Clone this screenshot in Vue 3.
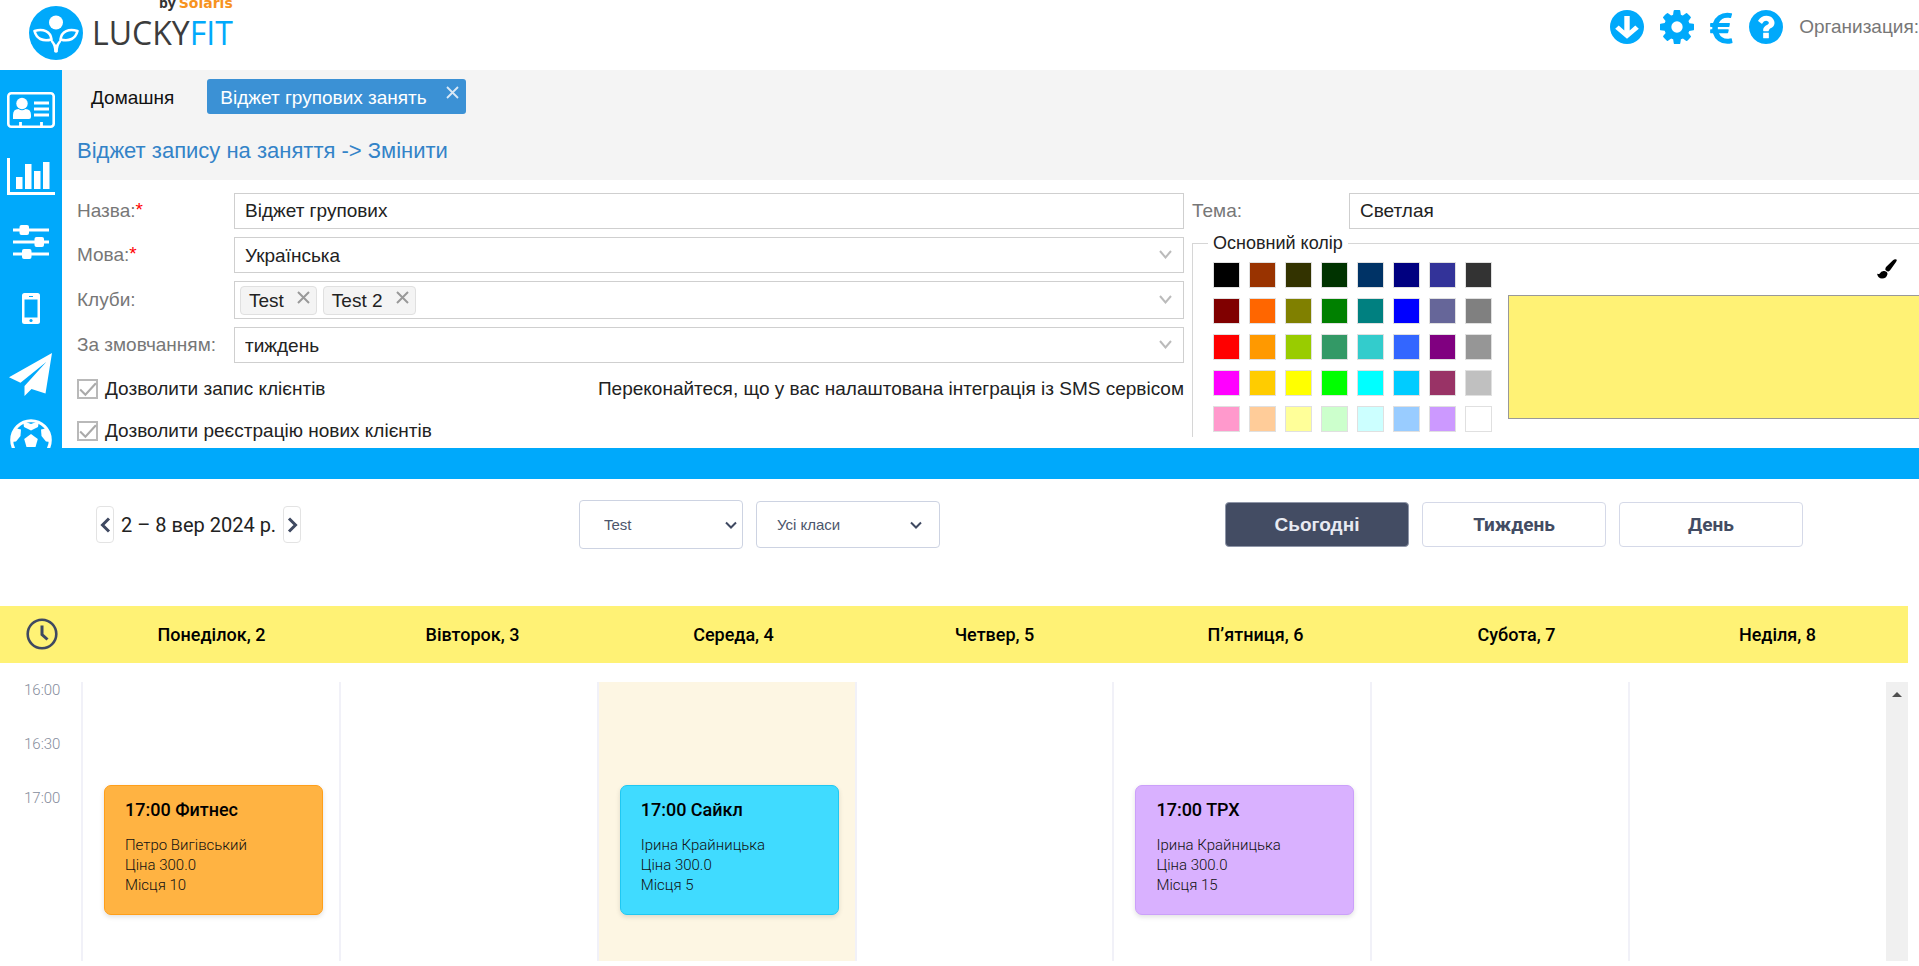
<script setup>
import { ref } from 'vue'

const name = ref('Віджет групових')
const theme = ref('Светлая')
const clubs = ref(['Test', 'Test 2'])
const allowBooking = ref(true)
const allowSignup = ref(true)
const color = ref('#fff275')

const palette = [
  '#000000', '#993300', '#333300', '#003300', '#003366', '#000080', '#333399', '#333333',
  '#800000', '#ff6600', '#808000', '#008000', '#008080', '#0000ff', '#666699', '#808080',
  '#ff0000', '#ff9900', '#99cc00', '#339966', '#33cccc', '#3366ff', '#800080', '#969696',
  '#ff00ff', '#ffcc00', '#ffff00', '#00ff00', '#00ffff', '#00ccff', '#993366', '#c0c0c0',
  '#ff99cc', '#ffcc99', '#ffff99', '#ccffcc', '#ccffff', '#99ccff', '#cc99ff', '#ffffff',
]

const times = ['16:00', '16:30', '17:00']
const days = [
  { title: 'Понеділок, 2', event: { kind: 'orange', title: '17:00 Фитнес', coach: 'Петро Вигівський', price: 'Ціна 300.0', places: 'Місця 10' } },
  { title: 'Вівторок, 3' },
  { title: 'Середа, 4', today: true, event: { kind: 'cyan', title: '17:00 Сайкл', coach: 'Ірина Крайницька', price: 'Ціна 300.0', places: 'Місця 5' } },
  { title: 'Четвер, 5' },
  { title: 'П’ятниця, 6', event: { kind: 'violet', title: '17:00 ТРХ', coach: 'Ірина Крайницька', price: 'Ціна 300.0', places: 'Місця 15' } },
  { title: 'Субота, 7' },
  { title: 'Неділя, 8' },
]
</script>

<template>
  <div class="page">
    <header class="top">
      <a class="logo" href="#" aria-label="LuckyFit">
        <svg class="logo-mark" viewBox="0 0 54 54" aria-hidden="true">
          <circle cx="27" cy="27" r="27" fill="#00a9fb" />
          <circle cx="27" cy="16.500" r="7" fill="#fff" />
          <g fill="none" stroke="#fff" stroke-width="2.6" stroke-linejoin="round">
            <path d="M5.500 25 C14 22.500 21.500 25 22.500 33.500 C13.500 36 7.500 32.500 5.500 25Z" />
            <path d="M48.500 25 C40 22.500 32.500 25 31.500 33.500 C40.500 36 46.500 32.500 48.500 25Z" />
          </g>
          <path d="M21 32 Q25 35 27 39 Q29 35 33 32 L32 36 Q29 39 28.800 46 Q27 47.500 25.200 46 Q25 39 22 36Z" fill="#fff" />
        </svg>
        <span class="logo-text">
          <span class="logo-by">by<b>Solaris</b></span>
          <span class="logo-name">LUCKY<span>FIT</span></span>
        </span>
      </a>
      <nav class="tools">
        <button type="button" aria-label="Завантажити">
          <svg width="34" height="34" viewBox="-17 -17 34 34">
            <circle r="17" fill="#00a9fb" />
            <path d="M-2.700 -11H2.700V3.500L8.300 -1.600L11.800 1.800L0 11.800L-11.800 1.800L-8.300 -1.600L-2.700 3.500Z" fill="#fff" />
          </svg>
        </button>
        <button type="button" aria-label="Налаштування">
          <svg width="34" height="34" viewBox="0 128 1536 1536"><path fill="#00a9fb" d="M1024 896q0-106-75-181t-181-75-181 75-75 181 75 181 181 75 181-75 75-181zm512-109v222q0 12-8 23t-20 13l-185 28q-19 54-39 91 35 50 107 138 10 12 10 25t-9 23q-27 37-99 108t-94 71q-12 0-26-9l-138-108q-44 23-91 38-16 136-29 186-7 28-36 28h-222q-14 0-24.500-8.500t-11.500-21.500l-28-184q-49-16-90-37l-141 107q-10 9-25 9-14 0-25-11-126-114-165-168-7-10-7-23 0-12 8-23 15-21 51-66.500t54-70.500q-27-50-41-99l-183-27q-13-2-21-12.500t-8-23.500v-222q0-12 8-23t19-13l186-28q14-46 39-92-40-57-107-138-10-12-10-24 0-10 9-23 26-36 98.500-107.500t94.500-71.500q13 0 26 10l138 107q44-23 91-38 16-136 29-186 7-28 36-28h222q14 0 24.500 8.500t11.500 21.500l28 184q49 16 90 37l142-107q9-9 24-9 13 0 25 10 129 119 165 170 7 8 7 22 0 12-8 23-15 21-51 66.500t-54 70.500q26 50 41 98l183 28q13 2 21 12.500t8 23.500z" /></svg>
        </button>
        <button type="button" aria-label="Оплата">
          <svg width="23" height="34" viewBox="0 190 1027 1536"><path fill="#00a9fb" d="M976 1491l35 159q3 12-3 22.500t-17 14.500l-5 1q-4 2-10.500 3.500t-16 4.500-21.500 5.500-25.500 5-30 5-33.500 4.500-36.500 3-38.500 1q-234 0-409-130.500t-238-351.500h-95q-13 0-22.500-9.500t-9.500-22.500v-113q0-13 9.500-22.500t22.500-9.500h66q-2-57 1-105h-67q-14 0-23-9t-9-23v-114q0-14 9-23t23-9h98q67-210 243.500-338t400.500-128q102 0 194 23 11 3 20 15 6 11 3 24l-43 159q-3 13-14 19.500t-24 2.500l-4-1q-4-1-11.500-2.500l-17.500-3.500-22.500-3.500-26-3-29-2.500-29.500-1q-126 0-226 64t-150 176h468q16 0 25 12 10 12 7 26l-24 114q-5 26-32 26h-488q-3 37 0 105h459q15 0 25 12 9 12 6 27l-24 112q-2 11-11 18.500t-20 7.500h-387q48 117 149.500 185.500t228.500 68.500q18 0 36-1.500t33.500-3.500 29.500-4.500 24.500-5 18.500-4.500l12-3 5-2q13-5 26 2 12 7 15 21z" /></svg>
        </button>
        <button type="button" aria-label="Допомога">
          <svg width="34" height="34" viewBox="0 128 1536 1536"><path fill="#00a9fb" d="M896 1376v-192q0-14-9-23t-23-9h-192q-14 0-23 9t-9 23v192q0 14 9 23t23 9h192q14 0 23-9t9-23zm256-672q0-88-55.500-163t-138.500-116-170-41q-243 0-371 213-15 24 8 42l132 100q7 6 19 6 16 0 25-12 53-68 86-92 34-24 86-24 48 0 85.500 26t37.500 59q0 38-20 61t-68 45q-63 28-115.500 86.500t-52.500 125.500v36q0 14 9 23t23 9h192q14 0 23-9t9-23q0-19 21.500-49.500t54.500-49.500q32-18 49-28.500t46-35 44.500-48 28-60.500 12.500-81zm384 192q0 209-103 385.500t-279.500 279.500-385.500 103-385.500-103-279.500-279.500-103-385.500 103-385.500 279.500-279.500 385.500-103 385.500 103 279.500 279.500 103 385.500z" /></svg>
        </button>
        <span class="org">Организация:</span>
      </nav>
    </header>

    <div class="admin">
      <aside class="side">
        <a href="#" aria-label="Клієнти">
          <svg width="48" height="36" viewBox="0 0 48 36">
            <rect x="1.300" y="1.300" width="45.400" height="33.400" rx="3" fill="none" stroke="#fff" stroke-width="2.600" />
            <circle cx="15" cy="11.500" r="5.700" fill="#fff" />
            <path d="M6 27v-4q0-6 5.500-6 3.500 2.500 7 0 5.500 0 5.500 6v2q0 2-2 2Z" fill="#fff" />
            <path d="M27 11h15M27 17h15M27 23h15M13.500 30v5M34.500 30v5" stroke="#fff" stroke-width="2.800" />
          </svg>
        </a>
        <a href="#" aria-label="Звіти">
          <svg width="48" height="37" viewBox="0 0 48 37" fill="#fff">
            <path d="M0 0h3v34h45v3H0ZM9 19h6.500v12H9ZM18 6h6.500v25H18ZM27 13h6.500v18H27ZM36 4h6.500v27H36Z" />
          </svg>
        </a>
        <a href="#" aria-label="Параметри">
          <svg width="36" height="34" viewBox="0 0 36 34" fill="#fff">
            <path d="M0 3.500h36v3H0ZM0 15.500h36v3H0ZM0 27.500h36v3H0Z" />
            <rect x="6.500" y="0" width="9.500" height="10" rx="2" />
            <rect x="21.500" y="12" width="9.500" height="10" rx="2" />
            <rect x="9" y="24" width="9.500" height="10" rx="2" />
          </svg>
        </a>
        <a href="#" aria-label="Мобільний застосунок">
          <svg width="18" height="31" viewBox="0 0 18 31">
            <rect width="18" height="31" rx="2.500" fill="#fff" />
            <path d="M2.500 6.500h13v18h-13ZM7 3h4v1H7Z" fill="#00a9fb" />
            <circle cx="9" cy="27.500" r="1.600" fill="#00a9fb" />
          </svg>
        </a>
        <a href="#" aria-label="Розсилка">
          <svg width="43" height="43" viewBox="0 0 43 43" fill="#fff">
            <path d="M43 0L0 24.300L11.500 29.700L37.500 8.700L15.500 33V43L22.500 36L36.500 40.500Z" />
          </svg>
        </a>
        <a href="#" aria-label="Заняття">
          <svg width="42" height="42" viewBox="-21 -21 42 42">
            <circle r="19.300" fill="none" stroke="#fff" stroke-width="3" />
            <g fill="#fff">
              <path d="M0 -6L6.800 -1L4.500 7H-4.500L-6.800 -1Z" />
              <path d="M-8 -19L0 -16L8 -19L7 -13L0 -9.500L-7 -13Z" />
              <path d="M-20 -3L-16.500 -12L-10 -10.500L-10.500 -4L-15 1.500L-19.500 2Z" />
              <path d="M20 -3L16.500 -12L10 -10.500L10.500 -4L15 1.500L19.500 2Z" />
              <path d="M-17 10L-9 9L-5 13L-7 19Z" />
              <path d="M17 10L9 9L5 13L7 19Z" />
            </g>
          </svg>
        </a>
      </aside>

      <main class="main">
        <div class="head">
          <nav class="tabs">
            <a class="tab" href="#">Домашня</a>
            <div class="tab active">
              <a href="#">Віджет групових занять</a>
              <button type="button" aria-label="Закрити вкладку">
                <svg width="13" height="13" viewBox="0 0 13 13"><path d="M1 1L12 12M12 1L1 12" stroke="#d9e9f6" stroke-width="1.800" /></svg>
              </button>
            </div>
          </nav>
          <h1>Віджет запису на заняття -&gt; Змінити</h1>
        </div>

        <form class="form" @submit.prevent>
          <div class="col">
            <div class="row">
              <label for="f-name">Назва:<sup>*</sup></label>
              <input id="f-name" v-model="name" class="field" type="text" />
            </div>
            <div class="row">
              <label for="f-lang">Мова:<sup>*</sup></label>
              <div class="pick">
                <select id="f-lang" class="field"><option>Українська</option></select>
                <svg class="chev" viewBox="0 0 13 9"><path d="M1 1L6.500 7.500L12 1" /></svg>
              </div>
            </div>
            <div class="row">
              <span id="f-clubs" class="lbl">Клуби:</span>
              <div class="pick">
                <div class="field tags" role="group" aria-labelledby="f-clubs">
                  <span v-for="club in clubs" :key="club" class="tag">
                    {{ club }}
                    <button type="button" :aria-label="'Прибрати ' + club">
                      <svg width="13" height="13" viewBox="0 0 13 13"><path d="M1 1L12 12M12 1L1 12" stroke="#999" stroke-width="2" /></svg>
                    </button>
                  </span>
                </div>
                <svg class="chev" viewBox="0 0 13 9"><path d="M1 1L6.500 7.500L12 1" /></svg>
              </div>
            </div>
            <div class="row">
              <label for="f-view">За змовчанням:</label>
              <div class="pick">
                <select id="f-view" class="field"><option>тиждень</option></select>
                <svg class="chev" viewBox="0 0 13 9"><path d="M1 1L6.500 7.500L12 1" /></svg>
              </div>
            </div>
            <div class="checks">
              <div class="check-row first">
                <label class="check">
                  <span class="box">
                    <input v-model="allowBooking" type="checkbox" />
                    <svg v-if="allowBooking" viewBox="0 0 20 20"><path d="M3 10L8 15L18 4" /></svg>
                  </span>
                  Дозволити запис клієнтів
                </label>
                <span>Переконайтеся, що у вас налаштована інтеграція із SMS сервісом</span>
              </div>
              <div class="check-row">
                <label class="check">
                  <span class="box">
                    <input v-model="allowSignup" type="checkbox" />
                    <svg v-if="allowSignup" viewBox="0 0 20 20"><path d="M3 10L8 15L18 4" /></svg>
                  </span>
                  Дозволити реєстрацію нових клієнтів
                </label>
              </div>
            </div>
          </div>

          <div class="col right">
            <div class="row">
              <label for="f-theme">Тема:</label>
              <input id="f-theme" v-model="theme" class="field" type="text" />
            </div>
            <fieldset class="colors">
              <legend>Основний колір</legend>
              <div class="colors-body">
                <div class="palette">
                  <button
                    v-for="c in palette"
                    :key="c"
                    type="button"
                    class="swatch"
                    :style="{ backgroundColor: c }"
                    :aria-label="c"
                    @click="color = c"
                  ></button>
                </div>
                <div class="preview-col">
                  <button type="button" class="brush" aria-label="Обрати колір">
                    <svg width="20" height="20" viewBox="0 0 20 20">
                      <path d="M19.500 0.500Q17.500 0 16 1.200L9 8Q8 10 8.500 11Q10 12.500 11.500 12.500Q13 11.500 14 10L19 3Q20.200 1.500 19.500 .5Z" />
                      <path d="M7.500 12Q10.500 12.500 10.500 15Q9.500 19.500 5 19.500Q1 19.500 0 14.500Q1.500 15.500 2.800 14.500Q4 11.500 7.500 12Z" />
                    </svg>
                  </button>
                  <div class="preview" :style="{ backgroundColor: color }"></div>
                </div>
              </div>
            </fieldset>
          </div>
        </form>
      </main>
    </div>

    <div class="divider"></div>

    <section class="widget">
      <div class="bar">
        <div class="range">
          <button type="button" class="step" aria-label="Попередній тиждень">
            <svg width="11" height="16" viewBox="0 0 11 16"><path d="M9 1.500L2.500 8L9 14.500" /></svg>
          </button>
          <span>2 – 8 вер 2024 р.</span>
          <button type="button" class="step" aria-label="Наступний тиждень">
            <svg width="11" height="16" viewBox="0 0 11 16"><path d="M2 1.500L8.500 8L2 14.500" /></svg>
          </button>
        </div>
        <div class="filters">
          <div class="filter club">
            <select aria-label="Клуб"><option>Test</option></select>
            <svg viewBox="0 0 12 9"><path d="M1 1.500L6 6.500L11 1.500" /></svg>
          </div>
          <div class="filter kind">
            <select aria-label="Клас"><option>Усі класи</option></select>
            <svg viewBox="0 0 12 9"><path d="M1 1.500L6 6.500L11 1.500" /></svg>
          </div>
        </div>
        <div class="modes">
          <button type="button" class="mode today-btn">Сьогодні</button>
          <button type="button" class="mode">Тиждень</button>
          <button type="button" class="mode">День</button>
        </div>
      </div>

      <div class="days">
        <div class="clock">
          <svg width="32" height="32" viewBox="0 0 32 32" fill="none" stroke="#3f4961">
            <circle cx="16" cy="16" r="14.300" stroke-width="2.600" />
            <path d="M16 7.500V16.500L21.500 21.500" stroke-width="3" />
          </svg>
        </div>
        <div v-for="d in days" :key="d.title" class="day">{{ d.title }}</div>
      </div>

      <div class="body">
        <div class="times">
          <div v-for="t in times" :key="t" class="time">{{ t }}</div>
        </div>
        <div v-for="d in days" :key="d.title" class="slot" :class="{ today: d.today }">
          <article v-if="d.event" class="event" :class="d.event.kind">
            <h2>{{ d.event.title }}</h2>
            <p>{{ d.event.coach }}</p>
            <p>{{ d.event.price }}</p>
            <p>{{ d.event.places }}</p>
          </article>
        </div>
        <div class="scroll">
          <svg width="10" height="5" viewBox="0 0 10 5"><path d="M0 5L5 0L10 5Z" fill="#505050" /></svg>
        </div>
      </div>
    </section>
  </div>
</template>

<style>
body {
  margin: 0;
  background: #fff;
}
</style>

<style scoped>
* {
  box-sizing: border-box;
}
.page {
  min-height: 100vh;
  display: flex;
  flex-direction: column;
  padding-bottom: 5px;
  overflow: hidden;
  font-family: "Liberation Sans", Arial, sans-serif;
  font-size: 19px;
  color: #222;
}
a {
  color: inherit;
  text-decoration: none;
}
button {
  padding: 0;
  border: 0;
  background: none;
  font: inherit;
  color: inherit;
  cursor: pointer;
}
svg {
  display: block;
}

/* Top bar */
.top {
  height: 70px;
  display: flex;
  justify-content: space-between;
  align-items: flex-start;
  overflow: hidden;
}
.logo {
  display: flex;
  padding-left: 29px;
}
.logo-mark {
  width: 54px;
  height: 54px;
  margin-top: 6px;
}
.logo-text {
  display: flex;
  flex-direction: column;
  align-items: flex-end;
  padding-left: 9px;
}
.logo-by {
  display: flex;
  gap: 3px;
  height: 12px;
  line-height: 12px;
  margin-top: -3px;
  font-family: "Open Sans", sans-serif;
  font-size: 14px;
  font-weight: 700;
  color: #333;
}
.logo-by b {
  font-family: "DejaVu Sans", sans-serif;
  font-size: 14px;
  color: #f7931e;
}
.logo-name {
  font-family: "Open Sans", sans-serif;
  font-size: 32px;
  font-weight: 500;
  line-height: 48px;
  color: #3c3c3c;
}
.logo-name span {
  color: #00a9fb;
}
.tools {
  display: flex;
  align-items: center;
  gap: 16px;
  height: 54px;
}
.org {
  color: #777;
}

/* Admin area */
.admin {
  display: flex;
}
.side {
  flex: 0 0 62px;
  contain: size;
  display: flex;
  flex-direction: column;
  padding: 7px 1px 0 0;
  background: #00a9fb;
  overflow: hidden;
}
.side a {
  flex: 0 0 66px;
  display: flex;
  align-items: center;
  justify-content: center;
}
.main {
  flex: 1;
  min-width: 0;
}
.head {
  padding: 9px 15px 13px;
  background: #f4f4f4;
}
.tabs {
  display: flex;
  gap: 19px;
}
.tab {
  height: 35px;
  line-height: 37px;
  padding: 0 14px;
  color: #111;
}
.tab.active {
  display: flex;
  gap: 19px;
  padding: 0 7px 0 13px;
  border-radius: 3px;
  background: #3b91d5;
  color: #fff;
}
.tab button {
  align-self: flex-start;
  padding-top: 7px;
}
h1 {
  margin: 21px 0 0;
  font-size: 22px;
  font-weight: 400;
  line-height: 32px;
  color: #3383c8;
}
.form {
  display: grid;
  grid-template-columns: minmax(0, 1107fr) minmax(0, 727fr);
  gap: 8px;
  padding: 13px 0 1px 15px;
}
.row {
  display: grid;
  grid-template-columns: 157px minmax(0, 1fr);
  align-items: center;
  margin-bottom: 8px;
}
.row label,
.lbl {
  color: #777;
}
sup {
  font-size: 19px;
  line-height: 0;
  vertical-align: 1px;
  color: #f00;
}
.field {
  display: block;
  width: 100%;
  height: 36px;
  padding: 0 10px;
  border: 1px solid #cfcfcf;
  border-radius: 0;
  background: #fff;
  font: inherit;
  color: #222;
  appearance: none;
}
.pick {
  position: relative;
}
.chev {
  position: absolute;
  right: 12px;
  top: calc(50% - 5px);
  width: 13px;
  height: 9px;
  fill: none;
  stroke: #bbb;
  stroke-width: 2;
  pointer-events: none;
}
.tags {
  display: flex;
  align-items: center;
  gap: 6px;
  height: 38px;
  padding: 0 5px;
}
.tag {
  display: flex;
  gap: 13px;
  height: 29px;
  padding: 0 6px 0 8px;
  border: 1px solid #e0e0e0;
  border-radius: 4px;
  background: #f4f4f4;
  line-height: 28px;
}
.tag button {
  align-self: flex-start;
  padding-top: 4px;
}
.checks {
  margin-top: -8px;
}
.check-row {
  display: flex;
  justify-content: space-between;
  align-items: center;
  height: 32px;
}
.check-row.first {
  height: 52px;
}
.check {
  display: flex;
  align-items: center;
  gap: 7px;
}
.box {
  position: relative;
  width: 21px;
  height: 20px;
}
.box input {
  display: block;
  width: 21px;
  height: 20px;
  margin: 0;
  border: 2px solid #b9b9b9;
  background: #fff;
  appearance: none;
}
.box svg {
  position: absolute;
  inset: 0;
  fill: none;
  stroke: #aaa;
  stroke-width: 2;
  pointer-events: none;
}
.right .field {
  border-right: 0;
}
.right .row {
  margin-bottom: 2px;
}
.colors {
  margin: 0;
  padding: 4px 0 5px 15px;
  border: 1px solid #d6d6d6;
  border-width: 1px 0 0 1px;
  min-width: 0;
}
.colors legend {
  padding: 0 5px;
  font-size: 18px;
  line-height: 24px;
}
.colors-body {
  display: flex;
  gap: 16px;
  padding-left: 5px;
}
.palette {
  display: grid;
  grid-template-columns: repeat(8, 27px);
  grid-auto-rows: 26px;
  gap: 10px 9px;
  padding-top: 3px;
}
.swatch {
  border: 1px solid #e0e0e0;
}
.preview-col {
  flex: 1;
  display: flex;
  flex-direction: column;
  gap: 16px;
}
.brush {
  align-self: flex-end;
  margin-right: 22px;
}
.preview {
  height: 124px;
  border: 1px solid #999;
  border-right: 0;
}
.divider {
  height: 31px;
  background: #00a9fb;
}

/* Schedule widget */
.widget {
  flex: 1;
  display: flex;
  flex-direction: column;
  font-family: Roboto, sans-serif;
}
.bar {
  display: grid;
  grid-template-columns: 483fr 646fr 578fr;
  align-items: center;
  padding: 21px 116px 57px 96px;
}
.range {
  display: flex;
  align-items: center;
  gap: 7px;
  font-size: 20px;
  color: #222;
}
.step {
  display: flex;
  align-items: center;
  justify-content: center;
  width: 18px;
  height: 37px;
  border: 1px solid #e3e3e3;
  border-radius: 4px;
}
.step svg,
.filter svg {
  fill: none;
  stroke: #3f4961;
  stroke-width: 3;
}
.filters {
  display: flex;
  align-items: center;
  gap: 13px;
  font-family: "Liberation Sans", Arial, sans-serif;
}
.filter {
  position: relative;
}
.filter select {
  display: block;
  width: 184px;
  height: 47px;
  padding: 0 20px;
  border: 1px solid #cdd3e2;
  border-radius: 4px;
  background: #fff;
  font: inherit;
  font-size: 15px;
  color: #4c566c;
  appearance: none;
}
.filter.club select {
  width: 164px;
  height: 49px;
  padding: 0 24px;
}
.filter svg {
  position: absolute;
  top: calc(50% - 4px);
  right: 18px;
  width: 12px;
  height: 9px;
  stroke-width: 2;
  pointer-events: none;
}
.filter.club svg {
  right: 6px;
}
.modes {
  display: grid;
  grid-template-columns: repeat(3, minmax(0, 1fr));
  gap: 13px;
}
.mode {
  height: 45px;
  border: 1px solid #d5d9e8;
  border-radius: 4px;
  background: #fff;
  font-size: 19px;
  font-weight: 700;
  color: #434c63;
}
.today-btn {
  background: #434c63;
  border-color: #8f96a8;
  font-family: "Liberation Sans", Arial, sans-serif;
  color: #e8eaf2;
}
.days {
  display: grid;
  grid-template-columns: 81px repeat(7, minmax(0, 1fr));
  align-items: center;
  height: 57px;
  margin-right: 11px;
  background: #fff275;
}
.clock {
  display: flex;
  justify-content: center;
  padding: 0 0 2px 3px;
}
.day {
  text-align: center;
  font-size: 18px;
  font-weight: 500;
  color: #000;
}
.body {
  flex: 1;
  display: grid;
  grid-template-columns: 81px repeat(7, minmax(0, 1fr)) 22px;
  margin: 19px 11px 0 0;
}
.time {
  height: 54px;
  padding-left: 24px;
  font-size: 15px;
  font-weight: 300;
  line-height: 16px;
  color: #858c9c;
}
.slot {
  padding: 103px 16px 20px 21px;
  border-left: 2px solid #f1f1f8;
}
.slot.today {
  background: #fdf6e3;
}
.event {
  padding: 14px 20px 19px;
  border: 1px solid;
  border-radius: 7px;
  box-shadow: 0 2px 5px rgba(0, 0, 0, 0.12);
  font-size: 15px;
  font-weight: 300;
  line-height: 20px;
  color: #111;
}
.event h2 {
  margin: 0 0 15px;
  font-size: 18px;
  font-weight: 500;
  line-height: 20px;
  color: #000;
}
.event p {
  margin: 0;
}
.event.orange {
  background: #ffb342;
  border-color: #ff9f1a;
}
.event.cyan {
  background: #40dbff;
  border-color: #1fc8f2;
}
.event.violet {
  background: #d9b1ff;
  border-color: #cba0fa;
}
.scroll {
  display: flex;
  justify-content: center;
  padding-top: 10px;
  background: #f0f0f0;
}
</style>
